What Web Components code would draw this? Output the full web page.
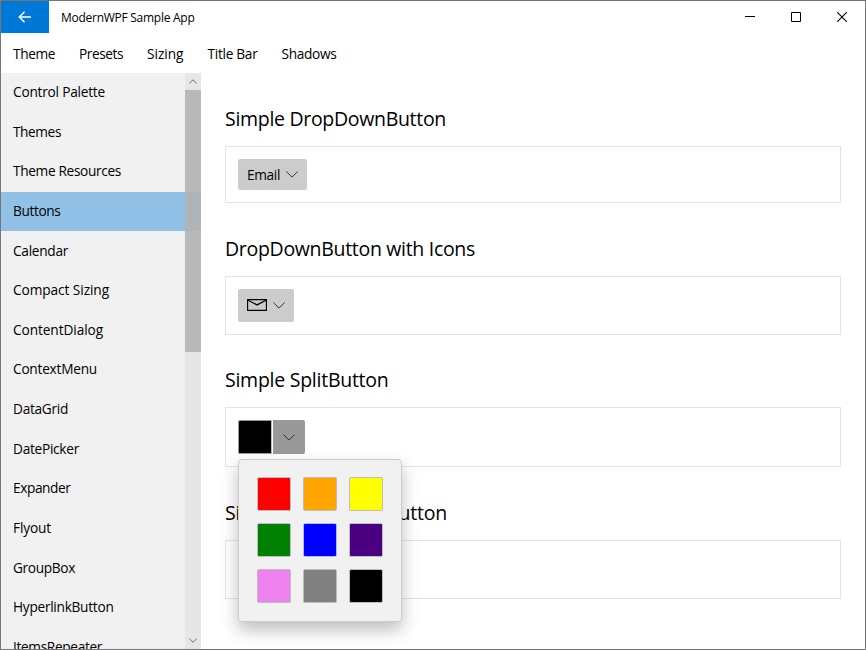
<!DOCTYPE html>
<html lang="en">
<head>
<meta charset="utf-8">
<title>ModernWPF Sample App</title>
<style>
html,body{margin:0;height:100%;overflow:hidden;background:#fff}
body{font:13.7px "Open Sans","Noto Sans",sans-serif;font-weight:370;font-stretch:95%;color:#000}
</style>
</head>
<body>
<app-window>
  <title-bar slot="title"><fit-text w="133.5" style="font-size:12px">ModernWPF Sample App</fit-text></title-bar>
  <menu-bar slot="menu">
    <fit-text w="42">Theme</fit-text><fit-text w="44">Presets</fit-text><fit-text w="36.5">Sizing</fit-text><fit-text w="50">Title Bar</fit-text><fit-text w="55">Shadows</fit-text>
  </menu-bar>
  <nav-list slot="nav">
    <nav-item><fit-text w="92">Control Palette</fit-text></nav-item>
    <nav-item><fit-text w="48">Themes</fit-text></nav-item>
    <nav-item><fit-text w="108">Theme Resources</fit-text></nav-item>
    <nav-item selected><fit-text w="47.5">Buttons</fit-text></nav-item>
    <nav-item><fit-text w="55">Calendar</fit-text></nav-item>
    <nav-item><fit-text w="96">Compact Sizing</fit-text></nav-item>
    <nav-item><fit-text w="90">ContentDialog</fit-text></nav-item>
    <nav-item><fit-text w="84">ContextMenu</fit-text></nav-item>
    <nav-item><fit-text w="55">DataGrid</fit-text></nav-item>
    <nav-item><fit-text w="66">DatePicker</fit-text></nav-item>
    <nav-item><fit-text w="57.5">Expander</fit-text></nav-item>
    <nav-item><fit-text w="38">Flyout</fit-text></nav-item>
    <nav-item><fit-text w="62">GroupBox</fit-text></nav-item>
    <nav-item><fit-text w="100.5">HyperlinkButton</fit-text></nav-item>
    <nav-item><fit-text w="89">ItemsRepeater</fit-text></nav-item>
  </nav-list>
  <demo-section style="--h:57px"><fit-text slot="heading" w="221">Simple DropDownButton</fit-text>
    <drop-button style="--bw:69px;--bh:31px;--nudge:-1px"><fit-text w="33">Email</fit-text></drop-button>
  </demo-section>
  <demo-section style="--h:59px;--after:32px"><fit-text slot="heading" w="250">DropDownButton with Icons</fit-text>
    <drop-button style="--bw:56px;--bh:33px;--nudge:-1px"><mail-icon></mail-icon></drop-button>
  </demo-section>
  <demo-section style="--h:60px"><fit-text slot="heading" w="163.5">Simple SplitButton</fit-text>
    <split-button><color-flyout></color-flyout></split-button>
  </demo-section>
  <demo-section style="--h:59px"><fit-text slot="heading" w="222">Simple ToggleSplitButton</fit-text></demo-section>
</app-window>
<script>
function define(name, html, ready) {
  const t = document.createElement('template');
  t.innerHTML = html;
  customElements.define(name, class extends HTMLElement {
    constructor() {
      super();
      this.attachShadow({mode: 'open'}).append(t.content.cloneNode(true));
    }
    connectedCallback() { if (ready) ready(this); }
  });
}
define('chevron-icon', `<style>:host{display:block;width:var(--cw,12px);height:var(--ch,7px);color:#333}:host([up]){transform:scaleY(-1)}svg{display:block;width:100%;height:100%}</style>
<svg viewBox="0 0 12 7" fill="none" stroke="currentColor"><path d="M.4.5 6 6.1 11.6.5"/></svg>`);
define('mail-icon', `<style>:host{display:block;width:20px;height:12px}svg{display:block}</style>
<svg width="20" height="12" fill="none" stroke="#000"><path d="M.5.5h19v11H.5z" stroke-width="1.3"/><path d="M.5 1 10 5.9 19.5 1" stroke-width="1.3"/></svg>`);
define('app-window', `<style>
:host{display:grid;box-sizing:border-box;width:866px;height:650px;border:1px solid #767676;background:#fff;grid-template:32px 40px 576px / 200px 1fr;overflow:hidden}
.title,.menu{grid-column:1/3;min-width:0}
.nav,main{min-width:0;min-height:0;overflow:hidden}
main{padding:33px 24px 0}
</style><div class="title"><slot name="title"></slot></div><div class="menu"><slot name="menu"></slot></div><div class="nav"><slot name="nav"></slot></div><main><slot></slot></main>`);
define('title-bar', `<style>
:host{display:flex;height:32px}
.back{width:48px;background:#0078d7;display:grid;place-items:center}
.text{flex:1;padding-left:12px;line-height:31px}
.cap{width:46px;display:grid;place-items:center}
svg{display:block}
</style><div class="back"><svg width="14" height="12" fill="none" stroke="#fff" stroke-width="1.5"><path d="M6.5.8 1.3 6l5.2 5.2M1.3 6H13"/></svg></div>
<div class="text"><slot></slot></div>
<div class="cap"><svg width="10" height="10" stroke="#000"><path d="M0 4.5h10"/></svg></div>
<div class="cap"><svg width="10" height="10" fill="none" stroke="#000"><path d="M.5.5h9v9h-9z"/></svg></div>
<div class="cap"><svg width="10" height="10" stroke="#000" stroke-width="1.1"><path d="m.2.2 9.6 9.6M9.8.2.2 9.8"/></svg></div>`);
define('menu-bar', `<style>:host{display:flex;height:40px;line-height:42px;padding-left:12px;gap:24px}</style><slot></slot>`);
define('nav-list', `<style>
:host{display:grid;grid-template-columns:184px 16px;height:576px;background:#f1f1f1;overflow:hidden}
.items{grid-area:1/1/2/3;min-height:0}
.bar{grid-area:1/2;display:flex;flex-direction:column;background:#e6e6e6;z-index:1;--cw:8px;--ch:5px}
.bar div{height:17px;flex:none;display:grid;place-items:center}
.bar .thumb{height:262px;background:linear-gradient(#b9b9b9 0 102px,#afb4b8 102px 141px,#b9b9b9 141px)}
.bar .space{flex:1}
</style><div class="items"><slot></slot></div><div class="bar"><div><chevron-icon up></chevron-icon></div><div class="thumb"></div><div class="space"></div><div><chevron-icon></chevron-icon></div></div>`);
define('nav-item', `<style>:host{display:block;height:39.64px;line-height:37.6px;padding-left:12px;box-sizing:border-box}:host([selected]){background:linear-gradient(#91c1e7 39px,transparent 39px)}</style><slot></slot>`);
define('demo-section', `<style>
:host{display:block;margin-bottom:var(--after,33px)}
h2{margin:0 0 14px;font-size:19.5px;font-weight:inherit;line-height:26px;height:26px}
.box{box-sizing:border-box;height:var(--h);border:1px solid #e3e3e3;padding:12px}
</style><h2><slot name="heading"></slot></h2><div class="box"><slot></slot></div>`);
define('drop-button', `<style>:host{display:flex;align-items:center;box-sizing:border-box;width:var(--bw);height:var(--bh);padding:0 9px;gap:6px;border-radius:2px;background:#ccc}chevron-icon{flex:none;margin-top:-1px}::slotted(*){flex:none;margin-top:var(--nudge,1px)}</style><slot></slot><chevron-icon></chevron-icon>`);
define('split-button', `<style>
:host{display:flex;gap:1px;width:67px;height:34px;position:relative}
.color{box-sizing:border-box;width:34px;background:#000;border:1px solid #999;border-right-color:#bbb;border-radius:2px 0 0 2px}
.more{width:32px;background:#999;border-radius:0 2px 2px 0;display:grid;place-items:center}
::slotted(color-flyout){position:absolute;left:0;top:39px;z-index:5}
</style><div class="color"></div><div class="more"><chevron-icon></chevron-icon></div><slot></slot>`);
define('color-flyout', `<style>
:host{display:grid;box-sizing:border-box;width:164px;height:163px;padding:17px 18px;grid-template:repeat(3,34px)/repeat(3,34px);gap:12px;background:#f1f1f1;border:1px solid #ccc;border-radius:4px;box-shadow:0 8px 17px rgba(0,0,0,.26)}
i{border:1px solid #bdbdbd;border-radius:2px}
</style>` + ['red','orange','yellow','green','blue','indigo','violet','gray','black'].map(c => `<i style="background:${c}"></i>`).join(''));
/* Label whose tracking is adjusted so that its text spans the width given in "w". */
define('fit-text', `<style>:host{display:inline-block;white-space:nowrap}span{display:inline-block}</style><span><slot></slot></span>`, el => {
  const span = el.shadowRoot.querySelector('span'), w = +el.getAttribute('w');
  requestAnimationFrame(() => {
    span.style.letterSpacing = (w - span.getBoundingClientRect().width) / el.textContent.length + 'px';
    el.style.width = w + 'px';
  });
});
</script>
</body>
</html>
